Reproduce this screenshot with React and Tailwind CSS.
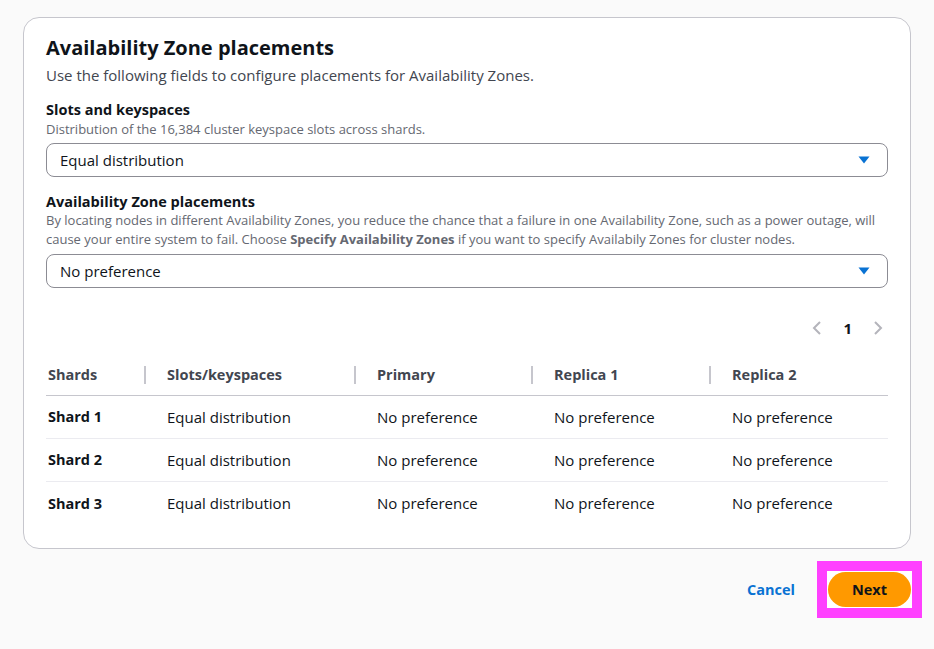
import React from 'react';

const rows = ['Shard 1', 'Shard 2', 'Shard 3'];

function Caret() {
  return (
    <svg width="12" height="8" viewBox="0 0 12 8" className="shrink-0">
      <path d="M0.5 0.5h11L6 7.5z" fill="#0972d3" />
    </svg>
  );
}

function Select({ value }) {
  return (
    <div className="flex h-[34px] items-center justify-between rounded-lg border border-[#8c8c94] bg-white pl-[13px] pr-[17px] text-[15px] text-[#0f141a]">
      <span>{value}</span>
      <Caret />
    </div>
  );
}

function HeaderCell({ children, sep }) {
  return (
    <div className="flex h-[40px] items-center">
      {sep && <div className="mr-[21px] h-[18px] w-[2px] bg-[#c6c6cd]" />}
      <span className={`font-bold text-[#424650] ${sep ? '' : 'pl-[2px]'}`}>{children}</span>
    </div>
  );
}

export default function App() {
  return (
    <div className="min-h-[649px] bg-[#fafafa] pt-[17px]" style={{ fontFamily: '"Open Sans", "Noto Sans", sans-serif' }}>
      <div className="ml-[23px] w-[888px] rounded-[16px] border border-[#c6c6cd] bg-white px-[22px] pt-[18px] pb-[23px]">
        <h2 className="text-[20px] font-bold leading-[24px] text-[#0f141a]">Availability Zone placements</h2>
        <p className="mt-[5px] text-[15px] leading-[20px] text-[#424650]">
          Use the following fields to configure placements for Availability Zones.
        </p>

        <div className="mt-[16px]">
          <div className="text-[14.5px] font-bold leading-[18px] text-[#0f141a]">Slots and keyspaces</div>
          <div className="mt-[1px] text-[13px] leading-[18px] text-[#656871]">
            Distribution of the 16,384 cluster keyspace slots across shards.
          </div>
          <div className="mt-[5px]">
            <Select value="Equal distribution" />
          </div>
        </div>

        <div className="mt-[16px]">
          <div className="text-[14.5px] font-bold leading-[18px] text-[#0f141a]">Availability Zone placements</div>
          <p className="text-[13px] leading-[19px] text-[#656871]">
            By locating nodes in different Availability Zones, you reduce the chance that a failure in one Availability Zone, such as a power outage, will cause your entire system to fail. Choose <b>Specify Availability Zones</b> if you want to specify Availabily Zones for cluster nodes.
          </p>
          <div className="mt-[5px]">
            <Select value="No preference" />
          </div>
        </div>

        <div className="mt-[32px] flex h-[16px] items-center justify-end gap-[21px] pr-[5px] text-[15px]">
          <svg width="10" height="16" viewBox="0 0 10 16">
            <path d="M8 2L2 8l6 6" fill="none" stroke="#b4b4bb" strokeWidth="2" />
          </svg>
          <span className="font-bold text-[#0f141a]">1</span>
          <svg width="10" height="16" viewBox="0 0 10 16">
            <path d="M2 2l6 6-6 6" fill="none" stroke="#b4b4bb" strokeWidth="2" />
          </svg>
        </div>

        <div className="mt-[19px] text-[15px]">
          <div className="grid grid-cols-[98px_210px_177px_178px_1fr] border-b border-[#c6c6cd] text-[14.5px]">
            <HeaderCell>Shards</HeaderCell>
            <HeaderCell sep>Slots/keyspaces</HeaderCell>
            <HeaderCell sep>Primary</HeaderCell>
            <HeaderCell sep>Replica 1</HeaderCell>
            <HeaderCell sep>Replica 2</HeaderCell>
          </div>
          {rows.map((r, i) => (
            <div
              key={r}
              className={`grid h-[43px] grid-cols-[98px_210px_177px_178px_1fr] items-center text-[#0f141a] ${i < rows.length - 1 ? 'border-b border-[#ebebf0]' : ''}`}
            >
              <span className="pl-[2px] text-[14.5px] font-bold">{r}</span>
              <span className="pl-[23px]">Equal distribution</span>
              <span className="pl-[23px]">No preference</span>
              <span className="pl-[23px]">No preference</span>
              <span className="pl-[23px]">No preference</span>
            </div>
          ))}
        </div>
      </div>

      <div className="mt-[12px] flex items-center justify-end gap-[22px] pr-[12px]">
        <span className="text-[14.5px] font-bold text-[#0972d3]">Cancel</span>
        <div className="border-[10px] border-[#ff40ff] bg-white p-[1px]">
          <button className="block h-[35px] w-[83px] rounded-full bg-[#ff9900] text-[14.5px] font-bold text-[#0f141a]">Next</button>
        </div>
      </div>
    </div>
  );
}
